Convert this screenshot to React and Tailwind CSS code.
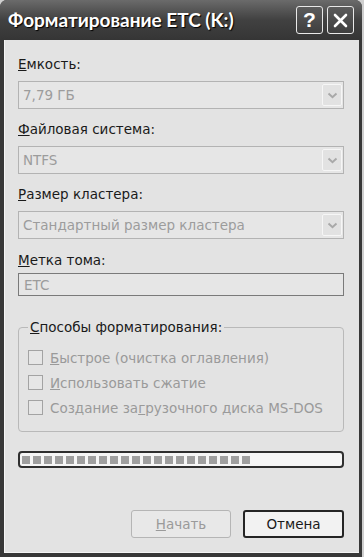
import React from 'react';

function Chevron() {
  return (
    <svg width="11" height="7" viewBox="0 0 11 7" fill="none">
      <path d="M1.5 1.5 L5.5 5.2 L9.5 1.5" stroke="#a9a9a9" strokeWidth="2" />
    </svg>
  );
}

function Combo({ value }) {
  return (
    <div className="h-[28px] flex items-center border border-[#b3b3b3] bg-[#e6e6e6] pl-[4px] pr-[1px]">
      <span className="flex-1 text-[#9c9c9c] truncate">{value}</span>
      <div className="w-[20px] h-[22px] flex items-center justify-center border border-[#f6f6f6] rounded-[2px] bg-[#e2e2e2]">
        <Chevron />
      </div>
    </div>
  );
}

function Check({ children }) {
  return (
    <div className="h-[25px] flex items-center gap-[7px]">
      <div className="w-[15px] h-[15px] border border-[#a3a3a3] bg-[#e6e6e6]" />
      <span className="text-[#9a9a9a]">{children}</span>
    </div>
  );
}

export default function App() {
  const blocks = Array.from({ length: 21 });

  return (
    <div className="w-[364px] h-[557px] bg-[#cfcfcf] font-['DejaVu_Sans',sans-serif] text-[13.5px] leading-[16px] text-[#1a1a1a]">
      <div className="w-[362px] h-full flex flex-col bg-[#383838] rounded-t-[7px] overflow-hidden">
        {/* title bar */}
        <div className="h-[40px] flex items-center pl-[8px] pr-[8px] bg-gradient-to-b from-[#6b6b6b] via-[#414141] to-[#353535]">
          <span className="font-['Lato',sans-serif] font-bold text-[19px] text-white [text-shadow:1px_1px_1px_#000]">
            Форматирование ETC (K:)
          </span>
          <div className="ml-auto flex gap-[4px]">
            <div className="w-[27px] h-[28px] rounded-[3px] border border-[#e8e8e8] bg-gradient-to-b from-[#5c5c5c] to-[#3e3e3e] flex items-center justify-center text-white font-bold text-[21px] font-['Liberation_Sans',sans-serif]">
              ?
            </div>
            <div className="w-[27px] h-[28px] rounded-[3px] border border-[#e8e8e8] bg-gradient-to-b from-[#5c5c5c] to-[#3e3e3e] flex items-center justify-center">
              <svg width="15" height="15" viewBox="0 0 15 15">
                <path d="M2 2 L13 13 M13 2 L2 13" stroke="#fff" strokeWidth="2.6" strokeLinecap="round" />
              </svg>
            </div>
          </div>
        </div>

        {/* content */}
        <div className="flex-1 ml-[4px] mr-[3px] mb-[4px] bg-[#e3e3e3] border-l border-b border-[#f5f5f5] pl-[13px] pr-[15px] pt-[16px] flex flex-col">
          <div><span className="underline">Е</span>мкость:</div>
          <div className="mt-[9px]"><Combo value="7,79 ГБ" /></div>

          <div className="mt-[12px]"><span className="underline">Ф</span>айловая система:</div>
          <div className="mt-[9px]"><Combo value="NTFS" /></div>

          <div className="mt-[12px]"><span className="underline">Р</span>азмер кластера:</div>
          <div className="mt-[9px]"><Combo value="Стандартный размер кластера" /></div>

          <div className="mt-[13px]"><span className="underline">М</span>етка тома:</div>
          <div className="mt-[5px] h-[23px] flex items-center border border-[#7a7a7a] bg-[#e6e6e6] pl-[5px] text-[#9c9c9c]">
            ETC
          </div>

          <fieldset className="mt-[23px] border border-[#b9b9b9] rounded-[4px] pl-[9px] pb-[11px]">
            <legend className="px-[2px]"><span className="underline">С</span>пособы форматирования:</legend>
            <div className="mt-[10px]">
              <Check><span className="underline">Б</span>ыстрое (очистка оглавления)</Check>
              <Check><span className="underline">И</span>спользовать сжатие</Check>
              <Check>Создание за<span className="underline">г</span>рузочного диска MS-DOS</Check>
            </div>
          </fieldset>

          {/* progress */}
          <div className="mt-[19px] h-[17px] rounded-[4px] border-2 border-[#2f2f2f] bg-[#f6f6f6] flex items-center gap-[3px] pl-[2px]">
            {blocks.map((_, i) => (
              <div key={i} className="w-[8px] h-[8px] bg-[#9f9f9f]" />
            ))}
          </div>

          <div className="mt-[42px] flex justify-end gap-[12px]">
            <div className="w-[100px] h-[28px] rounded-[3px] border border-[#b5b5b5] bg-[#e8e8e8] flex items-center justify-center text-[#9a9a9a]">
              <span><span className="underline">Н</span>ачать</span>
            </div>
            <div className="w-[101px] h-[28px] rounded-[3px] border-2 border-[#252525] bg-[#f2f2f2] flex items-center justify-center">
              Отмена
            </div>
          </div>
        </div>
      </div>
    </div>
  );
}
